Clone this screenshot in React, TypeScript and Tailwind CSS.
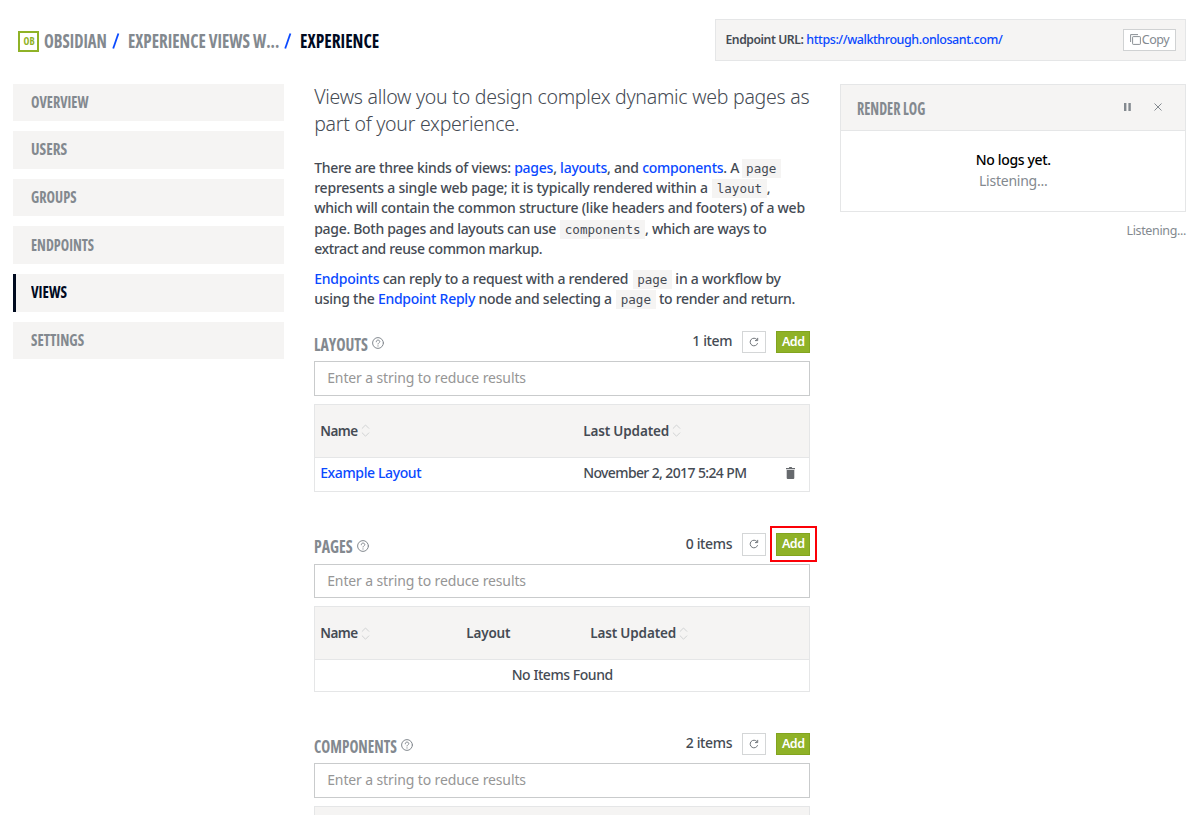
import { Fragment } from "react";
import type { ReactNode } from "react";

const heading = "font-['Open_Sans'] font-bold [font-stretch:75%] whitespace-nowrap";

function NavItem({ label, active, squeeze }: { label: string; active?: boolean; squeeze: string }) {
  return (
    <a
      className={`flex h-[37.6px] items-center border-l-[3px] bg-[#f5f4f3] pl-[15px] text-[16.5px] ${heading} ${
        active ? "border-[#000a1f] text-[#000a1f]" : "border-[#f5f4f3] text-[#83898f]"
      }`}
    >
      <span className={`-mt-[0.6px] origin-left ${squeeze}`}>{label}</span>
    </a>
  );
}

function Line({ className = "", children }: { className?: string; children: ReactNode }) {
  return <span className={`block h-[20.25px] whitespace-nowrap ${className}`}>{children}</span>;
}

function Link({ children }: { children: ReactNode }) {
  return <a className="text-[#0a49ff]">{children}</a>;
}

function Code({ children }: { children: ReactNode }) {
  return (
    <code className="ml-px bg-[#f5f4f3] px-[4.5px] py-[2px] font-['DejaVu_Sans_Mono',monospace] text-[12.6px] font-normal tracking-normal">
      {children}
    </code>
  );
}

function HelpIcon() {
  return (
    <svg className="-mt-px ml-[3.5px] size-[12px]" viewBox="0 0 12 12" fill="none" stroke="#83898f" strokeLinecap="round">
      <circle cx="6" cy="6" r="5.4" />
      <path d="M4.3 4.8C4.3 3.7 5 3.1 6 3.1s1.8.6 1.8 1.5c0 1.2-1.8 1.2-1.8 2.4" />
      <path d="M6 8.9v.1" strokeWidth="1.2" />
    </svg>
  );
}

function SortIcon() {
  return (
    <svg className="ml-[3px] h-[13px] w-[9px]" viewBox="0 0 9 13" fill="none" stroke="#d0d2d3">
      <path d="M.9 4.6 4.5 1l3.6 3.6M.9 8.6l3.6 3.6 3.6-3.6" />
    </svg>
  );
}

function RefreshIcon() {
  return (
    <svg className="size-[10px]" viewBox="0 0 10 10" fill="none" stroke="#6f7479">
      <path d="M8.6 6.2A3.8 3.8 0 1 1 8 2.7" />
      <path d="M8.7.9v2.7H6" />
    </svg>
  );
}

function TrashIcon() {
  return (
    <svg className="h-[12px] w-[9px]" viewBox="0 0 9 12" fill="#66696d">
      <path d="M0 .9h2.8L3.4 0h2.2l.6.9H9v1.3H0zM.7 3h7.6v8a1 1 0 0 1-1 1H1.7a1 1 0 0 1-1-1z" />
    </svg>
  );
}

function CopyIcon() {
  return (
    <svg className="-mt-px size-[11px]" viewBox="0 0 11 11" fill="none" stroke="#8a9095">
      <path d="M.6 8V.6H8" />
      <rect x="2.6" y="2.6" width="7.8" height="7.8" rx=".6" />
    </svg>
  );
}

type SectionHeadProps = { title: string; width: string; squeeze: string; count: string; highlight?: boolean };

function SectionHead({ title, width, squeeze, count, highlight }: SectionHeadProps) {
  return (
    <div className="flex h-[30.7px] items-start">
      <h2 className={`mt-[1.6px] flex h-[23px] items-center text-[17.5px] text-[#83898f] ${heading}`}>
        <span className={`origin-left ${width} ${squeeze}`}>{title}</span>
        <HelpIcon />
      </h2>
      <span className="mt-[0.3px] ml-auto leading-[20px] tracking-[-0.35px]">{count}</span>
      <button className="ml-[10px] flex h-[22.5px] w-[24px] items-center justify-center border border-[#d4d6d7] bg-white">
        <RefreshIcon />
      </button>
      <div className="relative ml-[10px]">
        <button className="flex h-[22.5px] w-[34px] items-center justify-center border border-[#82a41f] bg-[#8fb227] text-[12.5px] font-semibold tracking-[-0.5px] text-white">
          Add
        </button>
        {highlight && <div className="absolute -top-[7px] -left-[6px] h-[35.5px] w-[47px] border-2 border-[#fb0007]" />}
      </div>
    </div>
  );
}

function Filter() {
  return (
    <div className="mb-[8px] flex h-[34.5px] items-center border border-[#c9cbcc] pl-[12px] font-normal tracking-[-0.12px] text-[#969696]">
      <span className="-mt-[1.8px]">Enter a string to reduce results</span>
    </div>
  );
}

function Column({ label, sortable = true, width, tracking }: { label: string; sortable?: boolean; width: string; tracking: string }) {
  return (
    <div className={`flex items-center text-[13.5px] font-semibold ${width}`}>
      <span className={tracking}>{label}</span>
      {sortable && <SortIcon />}
    </div>
  );
}

const crumbs = [
  { label: "OBSIDIAN", className: "ml-[5px] w-[62.7px] text-[#83898f]", squeeze: "scale-x-[0.85]" },
  { label: "EXPERIENCE VIEWS W...", className: "w-[151px] text-[#83898f]", squeeze: "scale-x-[0.875]" },
  { label: "EXPERIENCE", className: "w-[79px] text-[#000a1f]", squeeze: "scale-x-[0.893]" },
];

export default function App() {
  return (
    <div className="h-[815px] w-[1200px] overflow-hidden bg-white pt-[19px] pr-[14px] pl-[13.3px] font-['Noto_Sans',sans-serif] text-[14px] font-medium text-[#454b54]">
      <header className="mb-[22.7px] flex h-[42px] justify-between">
        <div className={`flex items-center pt-[2px] pl-[5px] text-[19.5px] ${heading}`}>
          <div className="flex size-[21px] items-center justify-center border-2 border-[#8fb227] bg-white text-[#8fb227]">
            <span className="scale-x-90 text-[11px]">OB</span>
          </div>
          {crumbs.map((c, i) => (
            <Fragment key={c.label}>
              {i > 0 && (
                <svg className="mr-[7.5px] ml-[5.3px] h-[16px] w-[8px]" viewBox="0 0 8 16" stroke="#0a49ff" strokeWidth="1.8">
                  <path d="M1.2 15.5 6.4.5" />
                </svg>
              )}
              <div className={c.className}>
                <div className={`origin-left ${c.squeeze}`}>{c.label}</div>
              </div>
            </Fragment>
          ))}
        </div>
        <div className="flex w-[471px] items-center border border-[#e5e6e7] bg-[#f5f4f3] pr-[9px] pl-[9.5px] text-[12.5px]">
          <span className="mr-[3px] text-[12.2px] font-semibold tracking-[-0.45px]">Endpoint URL:</span>
          <span className="tracking-[-0.43px] text-[#0a49ff]">https://walkthrough.onlosant.com/</span>
          <button className="ml-auto flex h-[22.5px] w-[53px] items-center justify-center gap-px border border-[#d0d2d3] bg-white font-normal text-[#83898f]">
            <CopyIcon />
            <span className="tracking-[-0.4px]">Copy</span>
          </button>
        </div>
      </header>

      <div className="flex items-start">
        <nav className="mr-[30.5px] flex w-[270.4px] flex-col gap-[10px]">
          <NavItem label="OVERVIEW" squeeze="scale-x-[0.865]" />
          <NavItem label="USERS" squeeze="scale-x-[0.92]" />
          <NavItem label="GROUPS" squeeze="scale-x-[0.87]" />
          <NavItem label="ENDPOINTS" squeeze="scale-x-[0.86]" />
          <NavItem label="VIEWS" squeeze="scale-x-[0.9]" active />
          <NavItem label="SETTINGS" squeeze="scale-x-[0.89]" />
        </nav>

        <main className="mr-[30.3px] w-[496px]">
          <p className="-mt-[0.8px] mb-[21px] text-[19.5px] leading-[27px] font-[350] tracking-[-0.26px] whitespace-nowrap">
            Views allow you to design complex dynamic web pages as
            <br />
            part of your experience.
          </p>
          <p className="mb-[10px] leading-[20.25px]">
            <Line className="tracking-[-0.25px]">
              There are three kinds of views: <Link>pages</Link>, <Link>layouts</Link>, and <Link>components</Link>. A{" "}
              <span className="-ml-[2px]"><Code>page</Code></span>
            </Line>
            <Line className="tracking-[-0.22px]">
              represents a single web page; it is typically rendered within a <Code>layout</Code>,
            </Line>
            <Line className="tracking-[-0.24px]">which will contain the common structure (like headers and footers) of a web</Line>
            <Line className="tracking-[-0.3px]">
              page. Both pages and layouts can use <Code>components</Code>, which are ways to
            </Line>
            <Line className="tracking-[-0.36px]">extract and reuse common markup.</Line>
          </p>
          <p className="mb-[21.1px] leading-[20.25px]">
            <Line className="tracking-[-0.24px]">
              <Link>Endpoints</Link> can reply to a request with a rendered <Code>page</Code> in a workflow by
            </Line>
            <Line className="tracking-[-0.26px]">
              using the <Link>Endpoint Reply</Link> node and selecting a <Code>page</Code> to render and return.
            </Line>
          </p>

          <section className="h-[202.5px]">
            <SectionHead title="LAYOUTS" width="w-[54.5px]" squeeze="scale-x-[0.9]" count="1 item" />
            <Filter />
            <div className="border border-[#e5e6e7]">
              <div className="flex h-[53px] items-center border-b border-[#e5e6e7] bg-[#f5f4f3] pl-[5px]">
                <Column label="Name" width="w-[263px]" tracking="tracking-[-0.5px]" />
                <Column label="Last Updated" width="w-[160px]" tracking="tracking-[-0.15px]" />
              </div>
              <div className="flex h-[33px] items-center pr-[14px] pl-[5px]">
                <span className="-mt-[3.5px] w-[263px] tracking-[-0.38px] text-[#0a49ff]">Example Layout</span>
                <span className="-mt-[3.5px] tracking-[-0.62px]">November 2, 2017 5:24 PM</span>
                <span className="-mt-[3.5px] ml-auto">
                  <TrashIcon />
                </span>
              </div>
            </div>
          </section>

          <section className="h-[199.5px]">
            <SectionHead title="PAGES" width="w-[39px]" squeeze="scale-x-[0.9]" count="0 items" highlight />
            <Filter />
            <div className="border border-[#e5e6e7]">
              <div className="flex h-[52.5px] items-center border-b border-[#e5e6e7] bg-[#f5f4f3] pl-[5px]">
                <Column label="Name" width="w-[146px]" tracking="tracking-[-0.5px]" />
                <Column label="Layout" width="w-[124px]" tracking="tracking-[-0.15px]" sortable={false} />
                <Column label="Last Updated" width="w-[160px]" tracking="tracking-[-0.15px]" />
              </div>
              <div className="flex h-[30.7px] items-center justify-center pb-[2px] tracking-[-0.45px]">No Items Found</div>
            </div>
          </section>

          <section>
            <SectionHead title="COMPONENTS" width="w-[83px]" squeeze="scale-x-[0.865]" count="2 items" />
            <Filter />
            <div className="h-[60px] border border-[#e5e6e7] bg-[#f5f4f3]" />
          </section>
        </main>

        <aside className="w-[345.5px]">
          <div className="h-[128.5px] border border-[#e5e6e7]">
            <div className="flex h-[46px] items-center border-b border-[#e5e6e7] bg-[#f5f4f3] pt-[4px] pr-[23px] pl-[15.5px]">
              <h3 className={`origin-left scale-x-[0.835] text-[17px] text-[#83898f] ${heading}`}>RENDER LOG</h3>
              <svg className="-mt-[4px] ml-auto h-[8px] w-[7px]" viewBox="0 0 7 8" fill="#83898f">
                <path d="M0 0h2.4v8H0zM4.4 0h2.4v8H4.4z" />
              </svg>
              <svg className="-mt-[4px] ml-[23px] size-[8px]" viewBox="0 0 8 8" stroke="#83898f">
                <path d="m.5.5 7 7m0-7-7 7" />
              </svg>
            </div>
            <div className="flex flex-col items-center pt-[19.7px] leading-[20.3px]">
              <div className="tracking-[-0.35px] text-black">No logs yet.</div>
              <div className="font-normal tracking-[-0.25px] text-[#83898f]">Listening...</div>
            </div>
          </div>
          <div className="mt-[10px] text-right text-[12.5px] leading-[17px] font-normal tracking-[-0.35px] text-[#83898f]">Listening...</div>
        </aside>
      </div>
    </div>
  );
}
